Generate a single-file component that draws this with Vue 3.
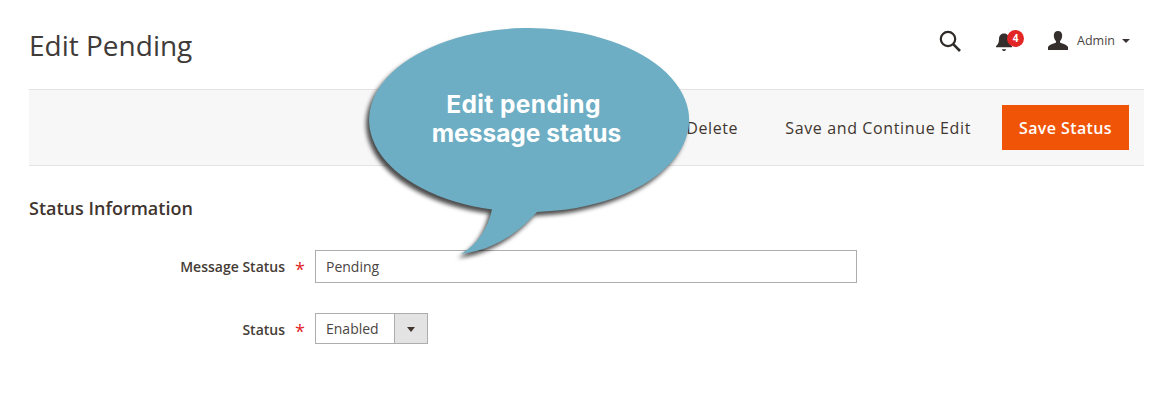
<template>
  <div class="page">
    <header class="top">
      <h1 class="title">Edit Pending</h1>
      <div class="actions">
        <svg class="search" viewBox="0 0 22 22" width="22" height="22" aria-label="Search">
          <circle cx="9" cy="9" r="7.2" fill="none" stroke="#2f2b29" stroke-width="2.2" />
          <path d="M14.2 14.2 21 21" stroke="#2f2b29" stroke-width="2.6" fill="none" />
        </svg>
        <div class="bell">
          <svg viewBox="0 0 18 20" width="18" height="20" aria-label="Notifications">
            <path d="M9 1.500c-3.400 0-5 2.600-5 5.600 0 3.600-1 5.400-3 7.200v1h16v-1c-2-1.800-3-3.600-3-7.200 0-3-1.600-5.600-5-5.600Z" fill="#342f2d" />
            <path d="M6.800 17.200h4.400c-.3 1.200-1.100 1.800-2.200 1.800s-1.900-.6-2.200-1.800Z" fill="#342f2d" />
          </svg>
          <span class="badge">4</span>
        </div>
        <div class="user">
          <svg viewBox="0 0 20 19" width="20" height="19" aria-label="User">
            <path d="M10 0c2.700 0 4.200 2 4.200 4.700 0 2.200-1 4.300-2.200 5.400v1.500c1 .9 6.500 1.800 8 4.400V19H0v-3c1.500-2.600 7-3.500 8-4.400v-1.500C6.800 9 5.800 6.900 5.800 4.700 5.800 2 7.300 0 10 0Z" fill="#342f2d" />
          </svg>
          <span class="user-name">Admin</span>
          <span class="caret"></span>
        </div>
      </div>
    </header>

    <div class="toolbar">
      <a class="link">Delete</a>
      <a class="link">Save and Continue Edit</a>
      <button class="primary" type="button">Save Status</button>
    </div>

    <h2 class="section">Status Information</h2>

    <form class="form" @submit.prevent>
      <div class="row">
        <label class="label">Message Status</label>
        <span class="req">*</span>
        <input class="input" value="Pending" />
      </div>
      <div class="row">
        <label class="label label-low">Status</label>
        <span class="req">*</span>
        <div class="select">
          <span class="select-value">Enabled</span>
          <span class="select-btn"><i class="select-caret"></i></span>
        </div>
      </div>
    </form>

    <div class="callout">
      <svg class="bubble" viewBox="0 0 360 260" width="360" height="260" aria-hidden="true">
        <path d="M187 183.900A160 92 0 1 0 142 181.500C138 200 128 216 111 226C145 222 169 204 187 183.900Z" fill="#6eaec4" />
      </svg>
      <div class="callout-text">
        <div class="callout-first">Edit pending</div>
        <div>message status</div>
      </div>
    </div>
  </div>
</template>

<script setup>
</script>

<style>
html, body { margin: 0; background: #fff; }
</style>

<style scoped>
.page {
  position: relative;
  width: 1173px;
  height: 401px;
  overflow: hidden;
  box-sizing: border-box;
  padding: 0 29px;
  font-family: "Open Sans", "Liberation Sans", sans-serif;
  color: #41362f;
}
.top {
  height: 89px;
  display: flex;
  justify-content: space-between;
  align-items: flex-start;
}
.title {
  margin: 26px 0 0;
  font-size: 28px;
  line-height: 38px;
  font-weight: 400;
  color: #3f3b39;
}
.actions {
  display: flex;
  align-items: center;
  margin-top: 28px;
  padding-right: 14px;
}
.search { margin-top: 2px; margin-left: 1px; }
.bell {
  position: relative;
  display: flex;
  margin-left: 34px;
  margin-top: 3px;
}
.badge {
  position: absolute;
  left: 12px;
  top: -2px;
  width: 17px;
  height: 17px;
  border-radius: 50%;
  background: #e22626;
  color: #fff;
  font-size: 10px;
  font-weight: 700;
  line-height: 17px;
  text-align: center;
}
.user {
  display: flex;
  align-items: center;
  margin-left: 35px;
}
.user-name {
  margin-left: 9px;
  font-size: 12.5px;
  color: #4a4542;
}
.caret {
  margin-left: 7px;
  margin-top: 2px;
  border-left: 4px solid transparent;
  border-right: 4px solid transparent;
  border-top: 4px solid #3a3533;
}
.toolbar {
  height: 75px;
  display: flex;
  justify-content: flex-end;
  align-items: center;
  gap: 47px;
  padding-right: 15px;
  background: #f7f7f7;
  border-top: 1px solid #e3e3e3;
  border-bottom: 1px solid #e3e3e3;
}
.link {
  font-size: 16px;
  font-weight: 500;
  letter-spacing: .63px;
  color: #41362f;
}
.primary {
  width: 127px;
  height: 45px;
  margin-left: -16px;
  padding: 0;
  border: 0;
  background: #f05406;
  color: #fff;
  font-family: inherit;
  font-size: 16px;
  font-weight: 600;
  letter-spacing: .4px;
}
.section {
  margin: 31px 0 0;
  font-size: 18px;
  line-height: 22px;
  font-weight: 600;
  color: #41362f;
}
.form {
  margin-top: 31px;
  display: flex;
  flex-direction: column;
  gap: 30px;
}
.row {
  display: grid;
  grid-template-columns: 256px 30px auto;
  align-items: center;
}
.label {
  font-size: 14px;
  font-weight: 600;
  text-align: right;
  color: #453c36;
}
.label-low { padding-top: 2px; }
.req {
  font-size: 18px;
  line-height: 18px;
  padding-top: 5px;
  padding-left: 10px;
  color: #e22626;
  font-weight: 400;
}
.input {
  box-sizing: border-box;
  width: 542px;
  height: 33px;
  padding: 0 10px;
  border: 1px solid #adadad;
  outline: 0;
  font-family: inherit;
  font-size: 14px;
  color: #4a4542;
}
.select {
  box-sizing: border-box;
  width: 113px;
  height: 31px;
  display: flex;
  border: 1px solid #adadad;
}
.select-value {
  flex: 1;
  padding-left: 10px;
  font-size: 14px;
  line-height: 29px;
  color: #4a4542;
}
.select-btn {
  width: 32px;
  display: flex;
  align-items: center;
  justify-content: center;
  background: #e3e3e3;
  border-left: 1px solid #adadad;
}
.select-caret {
  margin-top: 2px;
  border-left: 4px solid transparent;
  border-right: 4px solid transparent;
  border-top: 5px solid #41362f;
}
.callout {
  position: absolute;
  left: 350px;
  top: 28px;
  width: 360px;
  height: 260px;
}
.bubble {
  display: block;
  overflow: visible;
  filter: drop-shadow(-3px 4px 2px rgba(0, 0, 0, .7));
}
.callout-text {
  position: absolute;
  left: 0;
  top: 62px;
  width: 353px;
  font-family: Inter, "Open Sans", sans-serif;
  font-size: 24.5px;
  font-weight: 700;
  line-height: 29px;
  text-align: center;
  color: #fff;
}
.callout-first {
  padding-right: 6px;
  letter-spacing: .4px;
}
</style>
